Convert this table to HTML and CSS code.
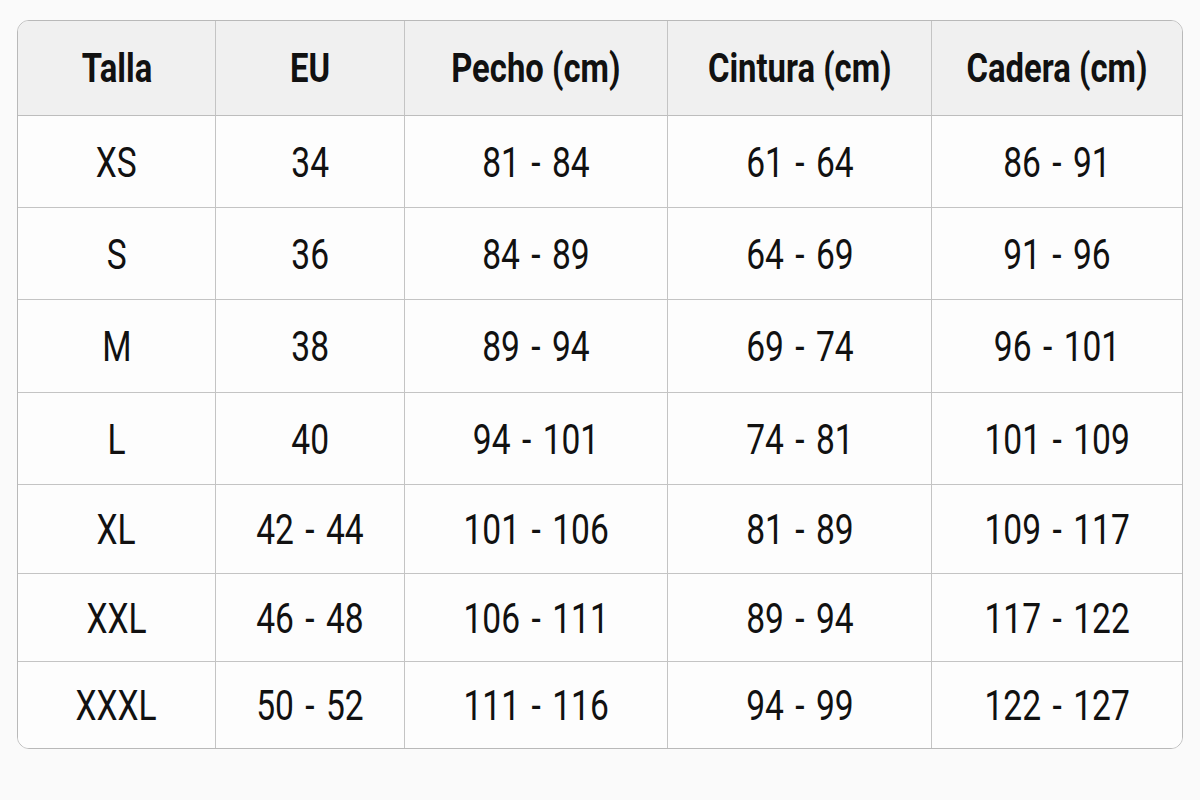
FILE: index.html
```html
<!DOCTYPE html>
<html lang="es">
<head>
<meta charset="utf-8">
<title>Tabla de tallas</title>
<link rel="stylesheet" href="styles.css">
</head>
<body>
<div class="page">
  <div class="card">
    <table class="sizes">
      <colgroup>
        <col class="c1"><col class="c2"><col class="c3"><col class="c4"><col class="c5">
      </colgroup>
      <thead>
        <tr><th><span class="t">Talla</span></th><th><span class="t">EU</span></th><th><span class="t">Pecho (cm)</span></th><th><span class="t">Cintura (cm)</span></th><th><span class="t">Cadera (cm)</span></th></tr>
      </thead>
      <tbody>
        <tr><td><span class="t">XS</span></td><td><span class="t">34</span></td><td><span class="t">81 - 84</span></td><td><span class="t">61 - 64</span></td><td><span class="t">86 - 91</span></td></tr>
        <tr><td><span class="t">S</span></td><td><span class="t">36</span></td><td><span class="t">84 - 89</span></td><td><span class="t">64 - 69</span></td><td><span class="t">91 - 96</span></td></tr>
        <tr><td><span class="t">M</span></td><td><span class="t">38</span></td><td><span class="t">89 - 94</span></td><td><span class="t">69 - 74</span></td><td><span class="t">96 - 101</span></td></tr>
        <tr><td><span class="t">L</span></td><td><span class="t">40</span></td><td><span class="t">94 - 101</span></td><td><span class="t">74 - 81</span></td><td><span class="t">101 - 109</span></td></tr>
        <tr><td><span class="t">XL</span></td><td><span class="t">42 - 44</span></td><td><span class="t">101 - 106</span></td><td><span class="t">81 - 89</span></td><td><span class="t">109 - 117</span></td></tr>
        <tr><td><span class="t">XXL</span></td><td><span class="t">46 - 48</span></td><td><span class="t">106 - 111</span></td><td><span class="t">89 - 94</span></td><td><span class="t">117 - 122</span></td></tr>
        <tr><td><span class="t">XXXL</span></td><td><span class="t">50 - 52</span></td><td><span class="t">111 - 116</span></td><td><span class="t">94 - 99</span></td><td><span class="t">122 - 127</span></td></tr>
      </tbody>
    </table>
  </div>
</div>
</body>
</html>
```

FILE: styles.css
```css
html, body {
  margin: 0;
  padding: 0;
  background: #fafafa;
}
.page {
  width: 1200px;
  height: 800px;
  padding: 20px 17px 0 17px;
  box-sizing: border-box;
}
.card {
  width: 1166px;
  border: 1.5px solid #b9b9b9;
  border-radius: 12px;
  overflow: hidden;
  background: #fdfdfd;
  box-sizing: border-box;
}
.sizes {
  width: 100%;
  border-collapse: separate;
  border-spacing: 0;
  table-layout: fixed;
  font-family: Roboto, "Liberation Sans", sans-serif;
  color: #111;
}
.c1 { width: 198px; }
.c2 { width: 189px; }
.c3 { width: 263px; }
.c4 { width: 264px; }
.c5 { width: auto; }
.sizes th, .sizes td {
  text-align: center;
  vertical-align: middle;
  padding: 0;
  border-right: 1.5px solid #c4c4c4;
  border-bottom: 1.5px solid #c4c4c4;
}
.sizes th:last-child, .sizes td:last-child { border-right: none; }
.sizes tbody tr:last-child td { border-bottom: none; }
.t {
  display: inline-block;
  white-space: nowrap;
  transform: scaleX(0.78);
}
.sizes th {
  background: #f0f0f0;
  font-weight: 700;
  font-size: 41px;
  height: 94px;
  border-bottom-color: #bdbdbd;
}
.sizes th .t { transform: scaleX(0.8); }
.sizes td {
  font-size: 43px;
  font-weight: 400;
  word-spacing: 4px;
  background: #fdfdfd;
}
.sizes tbody tr:nth-child(1) td { height: 91px; }
.sizes tbody tr:nth-child(2) td { height: 91px; }
.sizes tbody tr:nth-child(3) td { height: 92px; }
.sizes tbody tr:nth-child(4) td { height: 91px; }
.sizes tbody tr:nth-child(5) td { height: 88px; }
.sizes tbody tr:nth-child(6) td { height: 87px; }
.sizes tbody tr:nth-child(7) td { height: 86px; }
```
